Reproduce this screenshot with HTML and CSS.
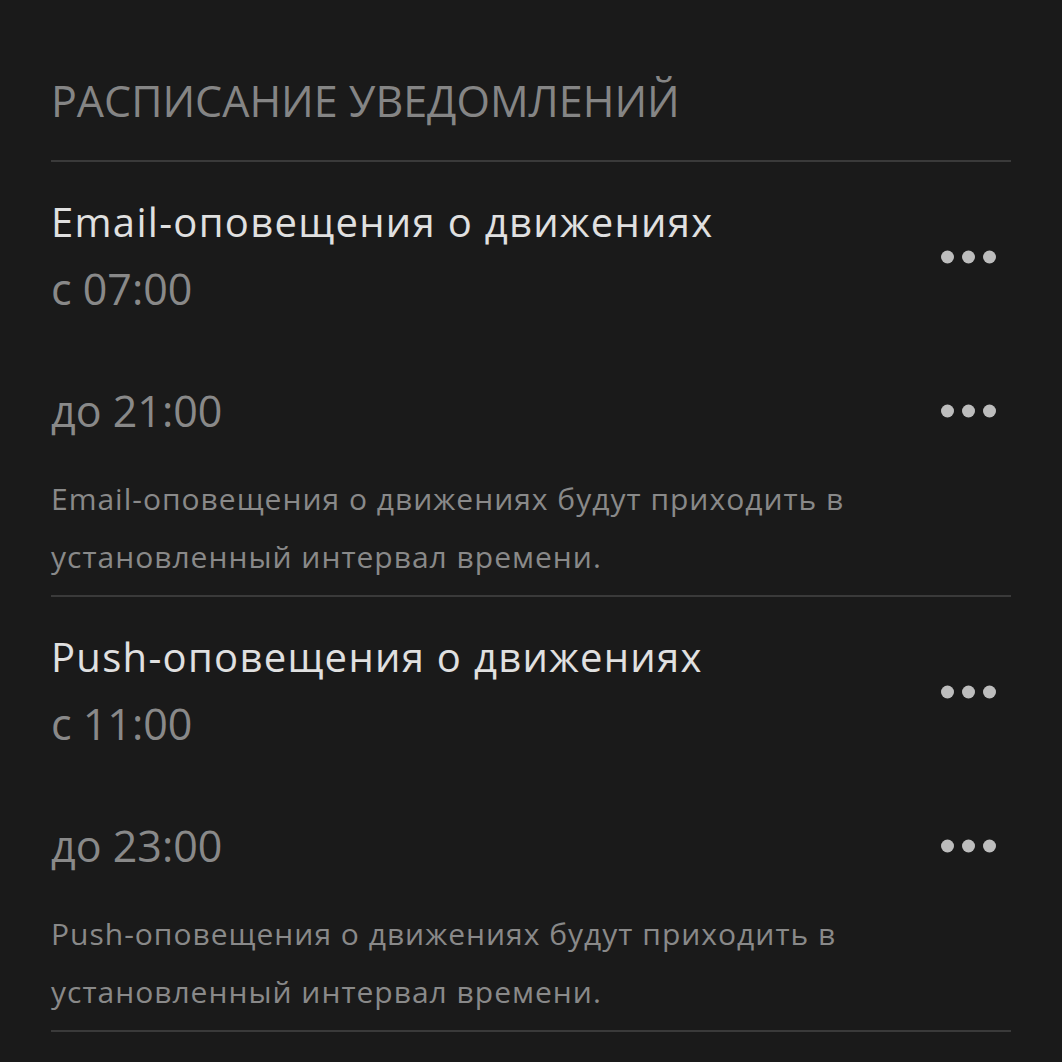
FILE: index.html
```html
<!DOCTYPE html>
<html>
<head>
    <title>Расписание уведомлений</title>
    <link rel="stylesheet" href="styles.css">
</head>
<body>
    <div class="page">
        <h1 class="header">РАСПИСАНИЕ УВЕДОМЛЕНИЙ</h1>

        <div class="section">
            <div class="row row-first">
                <div class="row-text">
                    <div class="title">Email-оповещения о движениях</div>
                    <div class="time">с 07:00</div>
                </div>
                <svg class="more" width="56" height="14" viewBox="0 0 56 14">
                    <circle cx="6.5" cy="7" r="6.5"/>
                    <circle cx="27.5" cy="7" r="6.5"/>
                    <circle cx="48.5" cy="7" r="6.5"/>
                </svg>
            </div>
            <div class="row row-second">
                <div class="time">до 21:00</div>
                <svg class="more" width="56" height="14" viewBox="0 0 56 14">
                    <circle cx="6.5" cy="7" r="6.5"/>
                    <circle cx="27.5" cy="7" r="6.5"/>
                    <circle cx="48.5" cy="7" r="6.5"/>
                </svg>
            </div>
            <p class="desc">Email-оповещения о движениях будут приходить в установленный интервал времени.</p>
        </div>

        <div class="section">
            <div class="row row-first">
                <div class="row-text">
                    <div class="title">Push-оповещения о движениях</div>
                    <div class="time">с 11:00</div>
                </div>
                <svg class="more" width="56" height="14" viewBox="0 0 56 14">
                    <circle cx="6.5" cy="7" r="6.5"/>
                    <circle cx="27.5" cy="7" r="6.5"/>
                    <circle cx="48.5" cy="7" r="6.5"/>
                </svg>
            </div>
            <div class="row row-second">
                <div class="time">до 23:00</div>
                <svg class="more" width="56" height="14" viewBox="0 0 56 14">
                    <circle cx="6.5" cy="7" r="6.5"/>
                    <circle cx="27.5" cy="7" r="6.5"/>
                    <circle cx="48.5" cy="7" r="6.5"/>
                </svg>
            </div>
            <p class="desc">Push-оповещения о движениях будут приходить в установленный интервал времени.</p>
        </div>
    </div>
</body>
</html>
```

FILE: styles.css
```css
body {
    font-family: "Open Sans", "Noto Sans", sans-serif;
    background-color: #1a1a1a;
    margin: 0;
    padding: 0;
}

.page {
    padding: 0 51px;
}

.header {
    margin: 0;
    padding: 71px 0 29px 0;
    font-size: 43px;
    font-weight: normal;
    line-height: 60px;
    color: #858585;
    border-bottom: 2px solid #3a3a3a;
}

.section {
    border-bottom: 2px solid #3a3a3a;
}

.row {
    display: flex;
    align-items: center;
    justify-content: space-between;
    padding-right: 14px;
}

.row-first {
    padding-top: 28px;
    padding-bottom: 26px;
}

.row-first .time {
    line-height: 70px;
}

.row-second {
    padding-top: 28px;
    padding-bottom: 26px;
}

.title {
    font-size: 40px;
    line-height: 64px;
    letter-spacing: 1.3px;
    color: #e0e0e0;
}

.time {
    font-size: 43px;
    line-height: 66px;
    color: #898989;
}

.more {
    fill: #bdbdbd;
}

.desc {
    margin: 0;
    padding-bottom: 9px;
    font-size: 30px;
    line-height: 58px;
    letter-spacing: 1px;
    color: #898989;
}
```
